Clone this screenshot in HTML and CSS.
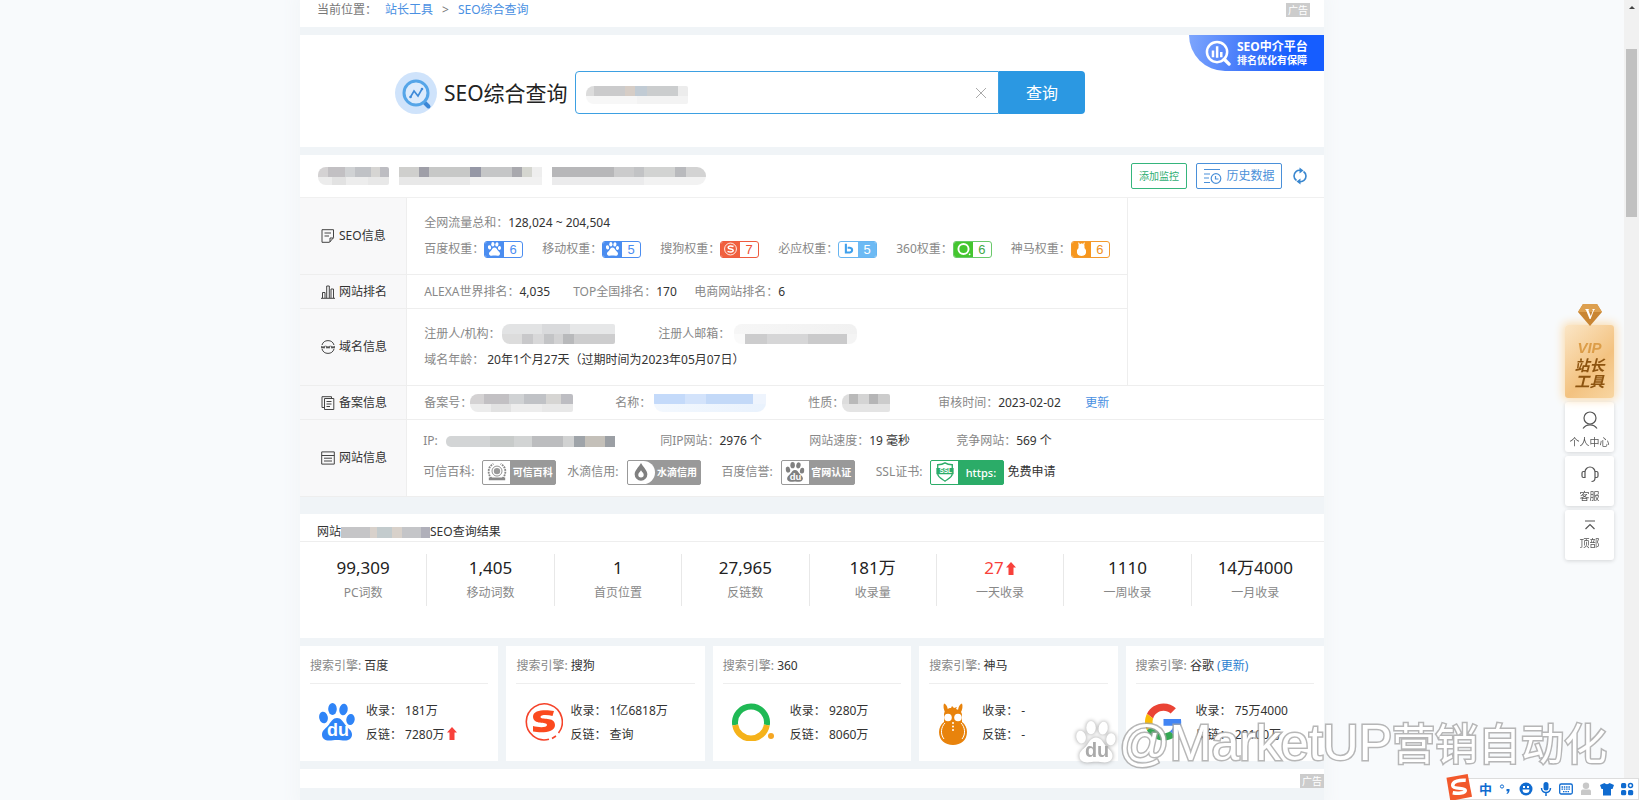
FILE: index.html
```html
<!DOCTYPE html>
<html lang="zh-CN">
<head>
<meta charset="utf-8">
<title>SEO综合查询</title>
<link rel="stylesheet" href="styles.css">
</head>
<body>
<svg class="defs" aria-hidden="true">
  <defs>
    <symbol id="paw" viewBox="0 0 36 38">
      <ellipse cx="13.500" cy="6" rx="4.300" ry="6"/><ellipse cx="24.500" cy="6.500" rx="4.200" ry="5.800" transform="rotate(10 24.500 6.500)"/>
      <ellipse cx="4.500" cy="14.500" rx="4.300" ry="5.800" transform="rotate(-12 4.500 14.500)"/><ellipse cx="31.500" cy="16.500" rx="4.200" ry="5.500" transform="rotate(8 31.500 16.500)"/>
      <path d="M18 15c4 0 6 3.500 8 6.500 2.500 3.500 7.500 6 7 10.500-.5 4-3.500 5.500-7 5.500-3 0-5-.6-8-.6s-5 .6-8 .6c-4 0-7-2-7-6 0-4.500 4.500-6.500 7-10 2-3 4-6.500 8-6.500z"/>
    </symbol>
    <symbol id="up" viewBox="0 0 10 13"><path d="M5 0l5 5.500H7.500V13h-5V5.500H0z" fill="#f8413b"/></symbol>
    <symbol id="llama" viewBox="0 0 28 42">
      <path d="M5 .5c3 1 4 5 4 8L6.500 10C4.500 7 4 3 5 .5zM23 .5c-3 1-4 5-4 8l2.500 1.500C23.500 7 24 3 23 .5z"/>
      <path d="M5 12c0-5 4-7 7-7l1-2 2 2 3-1-1 2c4 1 6 3 6 6v7c3 2 5 6 5 10 0 8-6 13-14 13S0 37 0 29c0-4 2-8 5-10z"/>
    </symbol>
  </defs>
</svg>

<main class="page">
  <nav class="card crumbs" aria-label="当前位置">
    <span class="muted-dark">当前位置：</span>
    <a href="#">站长工具</a><span class="sep">&gt;</span><a href="#">SEO综合查询</a>
    <span class="ad">广告</span>
  </nav>

  <section class="card search">
    <svg class="search-logo" viewBox="0 0 42 42" aria-hidden="true">
      <circle cx="21" cy="21" r="21" fill="#cfe3fb"/>
      <path d="M29.500 30.500l4 4" stroke="#3b86d6" stroke-width="4" stroke-linecap="round"/>
      <circle cx="21" cy="21" r="12" fill="#dcebfc" stroke="#55a5e8" stroke-width="3"/>
      <path d="M15.500 25l3.500-6 4 5 4-7" fill="none" stroke="#3f8ad8" stroke-width="1.600"/>
      <circle cx="15.500" cy="25" r="1.300" fill="#3f8ad8"/><circle cx="27" cy="17" r="1.300" fill="#3f8ad8"/>
    </svg>
    <h1>SEO综合查询</h1>
    <form class="search-form">
      <div class="field">
        <input type="text" aria-label="网站域名">
        <span class="mosaic m-input"></span>
        <button type="button" class="clear" aria-label="清除"><svg viewBox="0 0 12 12"><path d="M1 1l10 10M11 1L1 11" stroke="#aaa" fill="none"/></svg></button>
      </div>
      <button type="button" class="submit">查询</button>
    </form>
    <a href="#" class="ribbon">
      <svg viewBox="0 0 27 27" aria-hidden="true"><g fill="none" stroke="#fff" stroke-width="2.600"><circle cx="12.500" cy="12.500" r="10.500"/><path d="M20 20l5 5" stroke-width="3.500" stroke-linecap="round"/></g><path d="M7 11h2.600v7H7zM11.300 6.500h2.600v12h-2.600zM15.600 12.500h2.600v5.500h-2.600z" fill="#fff"/></svg>
      <span><b>SEO中介平台</b><small>排名优化有保障</small></span>
    </a>
  </section>

  <section class="card">
    <header class="info-head">
      <span class="mosaic m-h1"></span><span class="mosaic m-h2"></span><span class="mosaic m-h3"></span>
      <div class="actions">
        <button type="button" class="btn-green">添加监控</button>
        <button type="button" class="btn-blue"><svg viewBox="0 0 19 16" aria-hidden="true"><g fill="none" stroke="#4a90d9" stroke-width="1.200"><path d="M1 1.500h16M1 6h6M1 10h5M1 14.500h6"/><circle cx="13" cy="10.500" r="4.800"/><path d="M12.500 8v3h3"/></g></svg>历史数据</button>
        <button type="button" class="refresh" aria-label="刷新"><svg viewBox="0 0 14 18"><g fill="none" stroke="#3a87cf" stroke-width="1.600"><path d="M8 3.500C4 2.500 1 5.500 1 9c0 2 1 3.500 2.500 4.500M6 14.500c4 1 7-2 7-5.500 0-2-1-3.500-2.500-4.500"/></g><path d="M6.500 .5l4 3-4 3zM7.500 17.500l-4-3 4-3z" fill="#3a87cf"/></svg></button>
      </div>
    </header>
    <table class="info">
      <tr>
        <th scope="row"><span class="rowhead"><svg viewBox="0 0 14 14"><path d="M1 .7h11.500v8L8.500 13.300H1zM12.500 9H9v4M3.500 4h6.500M3.500 7h4.500"/></svg>SEO信息</span></th>
        <td>
          <div class="line">全网流量总和：<b>128,024 ~ 204,504</b></div>
          <div class="line weights">
            <span>百度权重：<i class="wt blue"><em><svg viewBox="0 0 36 38"><use href="#paw"/></svg></em><strong>6</strong></i></span>
            <span>移动权重：<i class="wt blue"><em><svg viewBox="0 0 36 38"><use href="#paw"/></svg></em><strong>5</strong></i></span>
            <span>搜狗权重：<i class="wt red"><em><svg viewBox="0 0 16 16"><circle cx="8" cy="8" r="6.800" fill="none" stroke="#fff"/><path d="M11.500 5.200C9 4.200 5.300 4.200 5.300 6.300c0 2.400 5.800 1 5.800 3.500 0 2.100-4 2-6.500.9" fill="none" stroke="#fff" stroke-width="1.800"/></svg></em><strong>7</strong></i></span>
            <span>必应权重：<i class="wt sky"><em><svg viewBox="0 0 16 16"><path d="M5 2v10l4.500 0c3.500-.5 3.500-5 0-5.500H7" fill="none" stroke="#3fa0ec" stroke-width="2.400"/></svg></em><strong>5</strong></i></span>
            <span>360权重：<i class="wt green"><em><svg viewBox="0 0 16 16"><circle cx="8" cy="8" r="5.800" fill="none" stroke="#fff" stroke-width="2.200"/><circle cx="15" cy="14" r="1"/></svg></em><strong>6</strong></i></span>
            <span>神马权重：<i class="wt orange"><em><svg viewBox="0 0 28 42"><use href="#llama"/></svg></em><strong>6</strong></i></span>
          </div>
        </td>
        <td class="blank" rowspan="3"></td>
      </tr>
      <tr>
        <th scope="row"><span class="rowhead"><svg viewBox="0 0 14 14"><path d="M0 13.300h14M1.500 13V7.500h2.500V13M5.700 13V1h2.600v12M10 13V4h2.500v9"/></svg>网站排名</span></th>
        <td><div class="line cols-rank"><span>ALEXA世界排名：<b>4,035</b></span><span>TOP全国排名：<b>170</b></span><span>电商网站排名：<b>6</b></span></div></td>
      </tr>
      <tr>
        <th scope="row"><span class="rowhead"><svg viewBox="0 0 14 14"><path d="M1 5a6.300 6.300 0 0 1 12 0M1 9a6.300 6.300 0 0 0 12 0M0 5.800l1 2.500 1-2 1 2 1-2.500M5 5.800l1 2.500 1-2 1 2 1-2.500M10 5.800l1 2.500 1-2 1 2 1-2.500"/></svg>域名信息</span></th>
        <td>
          <div class="line cols-domain"><span>注册人/机构：<span class="mosaic m-org"></span></span><span>注册人邮箱：<span class="mosaic m-mail"></span></span></div>
          <div class="line">域名年龄： <b>20年1个月27天（过期时间为2023年05月07日）</b></div>
        </td>
      </tr>
      <tr>
        <th scope="row"><span class="rowhead"><svg viewBox="0 0 14 14"><path d="M3.500 2.500h9.300v11H3.500zM3.500 11.500H1V.7h9.500v1.800M5.500 5.500h5M5.500 8h5M5.500 10.500h3.500"/></svg>备案信息</span></th>
        <td colspan="2"><div class="line cols-icp"><span>备案号：<span class="mosaic m-icp"></span></span><span>名称：<span class="mosaic m-name"></span></span><span>性质：<span class="mosaic m-kind"></span></span><span>审核时间：<b>2023-02-02</b></span><a href="#">更新</a></div></td>
      </tr>
      <tr>
        <th scope="row"><span class="rowhead"><svg viewBox="0 0 14 14"><path d="M.7.9h12.600v12.200H.7zM.7 4.500h12.600M3 7.200h8M3 10h8"/></svg>网站信息</span></th>
        <td colspan="2" class="site">
          <div class="line cols-site"><span>IP:<span class="mosaic m-ip"></span></span><span>同IP网站：<b>2976 个</b></span><span>网站速度：<b>19 毫秒</b></span><span>竞争网站：<b>569 个</b></span></div>
          <div class="line certs">
            <span>可信百科:<i class="cert"><em><svg viewBox="0 0 22 22"><g fill="none" stroke="#888"><circle cx="11" cy="10" r="5.500"/><path d="M5 18C0 13 1 5 7 2M17 18c5-5 4-13-2-16" stroke-width="2" stroke-dasharray="2 1"/></g><circle cx="11" cy="10" r="3.500" fill="#999"/><path d="M2 17h18v3H2z" fill="#888"/></svg></em><strong>可信百科</strong></i></span>
            <span class="near">水滴信用:<i class="cert drop"><em><svg viewBox="0 0 22 22"><path d="M11 1c2 4 7 8 7 12.500a7 7 0 0 1-14 0C4 9 9 5 11 1z" fill="#808080"/><path d="M11 9c1 2 3 3 3 5a3 3 0 0 1-6 0c0-2 2-3 3-5z" fill="#fff"/></svg></em><strong>水滴信用</strong></i></span>
            <span>百度信誉:<i class="cert"><em><svg viewBox="0 0 36 38" fill="#808080"><use href="#paw"/><text x="8" y="34" class="du">du</text></svg></em><strong>官网认证</strong></i></span>
            <span>SSL证书:<i class="cert ssl"><em><svg viewBox="0 0 22 22"><path d="M11 1c3 2 5 2 8 2v10c0 4-5 6-8 8-3-2-8-4-8-8V3c3 0 5 0 8-2z" fill="#fff" stroke="#2bac68" stroke-width="1.500"/><path d="M1.500 6.500h19v7h-19z" fill="#2bac68"/><text x="5" y="12.500" class="ssl-text">SSL</text></svg></em><strong>https:</strong></i><a href="#" class="apply">免费申请</a></span>
          </div>
        </td>
      </tr>
    </table>
  </section>

  <section class="card stats">
    <h2>网站<span class="mosaic m-site"></span>SEO查询结果</h2>
    <div class="stat-grid">
      <div><strong>99,309</strong><span>PC词数</span></div>
      <div><strong>1,405</strong><span>移动词数</span></div>
      <div><strong>1</strong><span>首页位置</span></div>
      <div><strong>27,965</strong><span>反链数</span></div>
      <div><strong>181万</strong><span>收录量</span></div>
      <div><strong class="rise">27<svg class="up"><use href="#up"/></svg></strong><span>一天收录</span></div>
      <div><strong>1110</strong><span>一周收录</span></div>
      <div><strong>14万4000</strong><span>一月收录</span></div>
    </div>
  </section>

  <section class="engines">
    <article class="card"><h3>搜索引擎: <b>百度</b></h3>
      <div class="engine"><svg class="logo" width="36" height="38" viewBox="0 0 36 38" fill="#2f84f7"><use href="#paw"/><text x="8" y="33" class="du">du</text></svg>
      <p>收录： 181万<br>反链： 7280万<svg class="up"><use href="#up"/></svg></p></div></article>
    <article class="card"><h3>搜索引擎: <b>搜狗</b></h3>
      <div class="engine tight"><svg class="logo" width="38" height="38" viewBox="0 0 38 38"><path d="M33.500 30A18 18 0 1 0 24 36.300M27 35.500l4-2.500" fill="none" stroke="#f5432a" stroke-width="1.600"/><path d="M29 8c-8-1.500-21-1.500-21 5.500 0 9 14 4.500 14 8.500 0 3-9 2.500-14 1v5.500c8 1.500 22 1.500 22-6.500 0-9-14.500-4.500-14.500-8 0-2.500 7-2.500 12-1z" fill="#fb4a1f"/></svg>
      <p>收录： 1亿6818万<br>反链： 查询</p></div></article>
    <article class="card"><h3>搜索引擎: <b>360</b></h3>
      <div class="engine wide"><svg class="logo" width="42" height="38" viewBox="0 0 42 38"><path d="M3.200 22a16 16 0 1 1 31.600 0" fill="none" stroke="#1fb955" stroke-width="6"/><path d="M3.200 22a16 16 0 0 0 31.600 0" fill="none" stroke="#f5b21a" stroke-width="6"/><circle cx="39" cy="33" r="3" fill="#f5a623"/></svg>
      <p>收录： 9280万<br>反链： 8060万</p></div></article>
    <article class="card"><h3>搜索引擎: <b>神马</b></h3>
      <div class="engine mid"><svg class="logo" width="30" height="42" viewBox="0 0 28 42"><use href="#llama" fill="#e8830c"/><g fill="#fff"><circle cx="9" cy="14.500" r="3.800"/><circle cx="19" cy="14.500" r="3.800"/><circle cx="14" cy="20" r="1"/><circle cx="14" cy="23.500" r="1"/><circle cx="14" cy="27" r="1"/></g><path d="M6 20c-4 4-5 11-1 16M22 20c4 4 5 11 1 16" fill="none" stroke="#fff"/></svg>
      <p>收录： -<br>反链： -</p></div></article>
    <article class="card"><h3>搜索引擎: <b>谷歌</b> <a href="#">(更新)</a></h3>
      <div class="engine mid"><svg class="logo" width="37" height="38" viewBox="0 0 48 48"><path fill="#ea4335" d="M24 9.500c3.540 0 6.710 1.220 9.210 3.600l6.850-6.850C35.900 2.380 30.470 0 24 0 14.620 0 6.510 5.380 2.560 13.220l7.980 6.190C12.430 13.720 17.740 9.500 24 9.500z"/><path fill="#4285f4" d="M46.980 24.550c0-1.570-.15-3.090-.38-4.550H24v9.020h12.940c-.58 2.960-2.260 5.480-4.780 7.180l7.730 6c4.510-4.180 7.090-10.360 7.090-17.650z"/><path fill="#fbbc05" d="M10.530 28.590c-.48-1.450-.76-2.990-.76-4.590s.27-3.140.76-4.590l-7.980-6.190C.92 16.460 0 20.120 0 24c0 3.880.92 7.540 2.560 10.780l7.970-6.190z"/><path fill="#34a853" d="M24 48c6.480 0 11.930-2.130 15.890-5.810l-7.730-6c-2.150 1.450-4.920 2.300-8.160 2.300-6.260 0-11.570-4.220-13.470-9.910l-7.980 6.190C6.510 42.620 14.620 48 24 48z"/></svg>
      <p>收录： 75万4000<br>反链： 28100万</p></div></article>
  </section>

  <div class="card strip"><span class="ad">广告</span></div>
</main>

<aside class="side">
  <a href="#" class="vip">
    <svg class="gem" viewBox="0 0 24 22" aria-hidden="true"><path d="M5 0h14l5 8-12 14L0 8z" fill="#c98532"/><path d="M5 0h14l5 8H0z" fill="#dda050"/><text x="7" y="15" class="gem-v">V</text></svg>
    <em>VIP</em><b>站长<br>工具</b>
  </a>
  <a href="#"><svg viewBox="0 0 20 20" aria-hidden="true"><circle cx="10" cy="8" r="6"/><path d="M3 18.500c2-3 4.500-3.700 7-3.700s5 .7 7 3.700"/></svg>个人中心</a>
  <a href="#"><svg viewBox="0 0 20 20" aria-hidden="true"><path d="M5 14V8a5 5 0 0 1 10 0v6c0 2-1 3.500-3.500 3.500M5 7.500H3.500c-1 0-1.500.5-1.500 1.500v3c0 1 .5 1.500 1.500 1.500H5M15 7.500h1.500c1 0 1.500.5 1.500 1.500v3c0 1-.5 1.500-1.500 1.500H15"/></svg>客服</a>
  <a href="#" class="top"><svg viewBox="0 0 20 20" aria-hidden="true"><path d="M5 6h10M5.500 14L10 9.500l4.500 4.500"/></svg>顶部</a>
</aside>

<div class="scrollbar" aria-hidden="true"><span class="arrow"></span><span class="thumb"></span></div>

<div class="watermark">
  <svg viewBox="0 0 36 38" aria-hidden="true"><use href="#paw"/><text x="8" y="33" class="du">du</text></svg>
  <span>@MarketUP</span><span class="zh">营销自动化</span>
</div>

<div class="ime">
  <svg class="ime-logo" viewBox="0 0 28 28" aria-hidden="true"><path d="M1 4l22-4 4.500 23.500L5 28z" fill="#f2582b"/><path d="M21 6.500C15 6 7 7.500 7.500 12c.5 4.500 13 1.500 13 5 0 3-8 3.500-13 2.500" fill="none" stroke="#fff" stroke-width="3.600"/></svg>
  <b>中</b>
  <svg viewBox="0 0 14 14"><circle cx="4" cy="4.500" r="1.600" fill="none" stroke="#0f6bd0"/><path d="M8.500 7h3c.3 2.500-.5 4-2.500 5l-.5-.7c1-.6 1.300-1.200 1.200-2H8.500z"/></svg>
  <svg viewBox="0 0 14 14"><circle cx="7" cy="7" r="6.500"/><path d="M3.500 7.500h7a3.500 3.500 0 0 1-7 0zM4 4h2v2H4zM8 4h2v2H8z" fill="#fff"/></svg>
  <svg viewBox="0 0 14 14"><rect x="4.500" y="0" width="5" height="8.500" rx="2.500"/><path d="M2.500 6c0 6 9 6 9 0M7 10.500V14" fill="none" stroke="#0f6bd0" stroke-width="1.500"/></svg>
  <svg viewBox="0 0 14 14"><rect x=".7" y="2" width="12.600" height="10" rx="1.500" fill="none" stroke="#0f6bd0" stroke-width="1.300"/><path d="M2.500 5h9M2.500 7.200h9M4 9.700h6" stroke="#0f6bd0" stroke-width="1.300" stroke-dasharray="1.500 .8"/></svg>
  <svg viewBox="0 0 14 14" class="off"><circle cx="7" cy="3.700" r="3.200"/><path d="M2 13V9.500C2 8 3 7.500 4 7.500h6c1 0 2 .5 2 2V13z"/></svg>
  <svg viewBox="0 0 14 14"><path d="M4.500 1c1 1.500 4 1.500 5 0L14 3l-1.500 4H11v6.500H3V7H1.500L0 3z"/></svg>
  <svg viewBox="0 0 14 14"><rect x="1" y="1" width="5.200" height="5.200" rx="1.500"/><circle cx="10.500" cy="3.600" r="2" fill="none" stroke="#0f6bd0" stroke-width="1.500"/><rect x="1" y="8" width="5.200" height="5.200" rx="1.500"/><rect x="8" y="8" width="5.200" height="5.200" rx="1.500"/></svg>
</div>
</body>
</html>
```

FILE: styles.css
```css
* { box-sizing: border-box; }
body {
  margin: 0;
  padding-right: 15px;
  min-height: 100vh;
  overflow: hidden;
  background: #f8fafc;
  color: #333;
  font: 12px/18px "Noto Sans", "Noto Sans CJK SC", sans-serif;
}
a { color: #4a90e2; text-decoration: none; }
button { font: inherit; cursor: pointer; padding: 0; }
b, i, em { font-weight: 400; font-style: normal; }
h1, h2, h3, p { margin: 0; font-weight: 400; }
.defs { position: absolute; width: 0; height: 0; }

.page {
  width: 63%;
  min-width: 1024px;
  max-width: 1200px;
  min-height: 100vh;
  margin: 0 auto;
  display: flex;
  flex-direction: column;
  gap: 8px;
  background: #f0f4f7;
  box-shadow: 0 0 14px 6px #f3f6f8;
}
.card { background: #fff; }

/* breadcrumb */
.crumbs { display: flex; align-items: center; padding: 1px 14px 8px 17px; }
.muted-dark { color: #777; width: 68px; }
.sep { padding: 0 9px; color: #777; }
.ad { margin-left: auto; padding: 0 2px; background: #ccc; color: #fff; font-size: 10px; line-height: 14px; }

/* search */
.search { position: relative; display: flex; align-items: center; padding: 36px 239px 33px 95px; }
.search-logo { width: 42px; height: 42px; margin-right: 7px; flex: none; }
.search h1 { font-size: 21px; line-height: 42px; color: #222; white-space: nowrap; margin-right: 7px; flex: none; }
.search-form { display: flex; flex: 1; height: 43px; }
.field { position: relative; flex: 1; }
.field input { width: 100%; height: 43px; border: 1px solid #3da0e2; border-radius: 4px 0 0 4px; padding: 0 36px 0 12px; font: inherit; outline: 0; }
.clear { position: absolute; right: 12px; top: 16px; width: 12px; height: 12px; border: 0; background: none; }
.clear svg { display: block; }
.submit { width: 86px; border: 0; border-radius: 0 4px 4px 0; background: #2b98e2; color: #fff; font-size: 16px; }
.ribbon {
  position: absolute; top: 0; right: 0; width: 135px; height: 36px;
  padding-left: 16px; display: flex; align-items: center; gap: 6px;
  border-bottom-left-radius: 36px; color: #fff;
  background: linear-gradient(100deg, #7ea6fd 0%, #3f76fa 45%, #165dff 75%);
}
.ribbon svg { width: 26px; height: 26px; }
.ribbon b, .ribbon small { display: block; font-weight: 700; white-space: nowrap; }
.ribbon b { font-size: 12px; line-height: 15px; }
.ribbon small { font-size: 10px; line-height: 13px; }

/* pixelated blocks */
.mosaic {
  display: inline-block; height: 18px; vertical-align: middle;
  border-radius: 8px 2px 2px 8px;
  background:
    linear-gradient(90deg, #d4d2d3 0 14%, #c2c0c3 14% 38%, #d0d2d4 38% 52%, #c0c2c6 52% 74%, #d6d5d3 74% 88%, #bdbdc2 88%) top / 100% 10px no-repeat,
    linear-gradient(90deg, #ececec 0 20%, #e2e2e2 20% 40%, #ededed 40% 70%, #e8e8e8 70%);
}
.m-input { position: absolute; left: 11px; top: 15px; width: 102px;
  background:
    linear-gradient(90deg, #dcdcdc 0 8%, #cbcbcc 8% 38%, #d6cdc6 38% 48%, #c1cbd4 48% 60%, #cbcdce 60% 90%, #ececec 90%) top / 100% 10px no-repeat,
    linear-gradient(90deg, #f7f7f7 0 50%, #f3f3f3 50%); }
.m-h1 { width: 71px; }
.m-h2 { width: 143px; border-radius: 0;
  background:
    linear-gradient(90deg, #cfcfcd 0 14%, #9f9fa8 14% 21%, #c7c8c7 21% 50%, #9698a6 50% 57%, #c5c6c7 57% 79%, #a9a9ae 79% 86%, #d5d6d0 86% 93%, #eee 93%) top / 100% 10px no-repeat,
    linear-gradient(90deg, #e8e8e8 0 50%, #f1f1f1 50%); }
.m-h3 { width: 154px; border-radius: 0 9px 9px 0;
  background:
    linear-gradient(90deg, #b7b7b9 0 40%, #cbcbcc 40% 53%, #c2c3c5 53% 60%, #d2d3d2 60% 80%, #b9babd 80% 87%, #d3d3d3 87%) top / 100% 10px no-repeat,
    linear-gradient(90deg, #ebebec 0 60%, #f2f2f2 60%); }
.m-org { width: 113px; height: 20px; margin-left: 1px;
  background:
    linear-gradient(90deg, #e2e3e4 0 35%, #d9dadc 35% 60%, #e6e7e8 60%) top / 100% 10px no-repeat,
    linear-gradient(90deg, #dcdcdc 0 18%, #c8c8ca 18% 27%, #d8d8d9 27% 37%, #c3c4c6 37% 46%, #d2d2d3 46% 54%, #b8b9bb 54% 64%, #cdcdce 64%); }
.m-mail { width: 123px; height: 20px; margin-left: 4px; border-radius: 8px;
  background:
    linear-gradient(90deg, #fafafa 0 9%, #cccccd 9% 27%, #d6d6d7 27% 60%, #cacacb 60% 92%, #f4f4f4 92%) bottom / 100% 10px no-repeat,
    linear-gradient(90deg, #f6f6f6, #f1f1f1); }
.m-icp { width: 103px; margin-left: -2px; }
.m-name { width: 112px; margin-left: 3px; border-radius: 0 0 9px 9px;
  background:
    linear-gradient(90deg, #c4dafa 0 28%, #d3e3fb 28% 46%, #c3d9f8 46% 88%, #eef4fd 88%) top / 100% 10px no-repeat,
    linear-gradient(90deg, #f3f8fe, #e9f2fd); }
.m-kind { width: 48px; margin-left: -2px;
  background:
    linear-gradient(90deg, #ddd 0 14%, #b9b9b9 14% 34%, #d4d4d4 34% 57%, #b5b5b6 57% 75%, #ccc 75%) top / 100% 10px no-repeat,
    #e4e4e4; }
.m-ip { width: 169px; height: 11px; margin-left: 8px; border-radius: 5px 0 0 5px;
  background: linear-gradient(90deg, #d3d5d6 0 26%, #c8cbca 26% 40%, #d2d4d4 40% 51%, #bcbdbf 51% 69%, #d1d2d2 69% 76%, #9fa4a9 76% 82%, #c4c0b9 82% 94%, #9b9fa4 94%); }
.m-site { width: 89px; height: 11px; border-radius: 0;
  background: linear-gradient(90deg, #c5c5c7 0 33%, #d8d1cb 33% 40%, #c3cbcd 40% 57%, #d8d1ca 57% 68%, #c4c5c8 68% 90%, #b0b0ba 90%); }

/* site information */
.info-head { display: flex; align-items: center; height: 43px; padding: 0 17px 0 18px; border-bottom: 1px solid #f0f0f0; }
.info-head .mosaic { margin-right: 10px; }
.actions { margin-left: auto; display: flex; align-items: center; }
.actions button { height: 26px; border-radius: 2px; background: #fff; display: flex; align-items: center; justify-content: center; }
.actions .btn-green { width: 56px; border: 1px solid #35b57c; color: #2fae74; font-size: 10px; }
.actions .btn-blue { width: 86px; margin: 0 11px 0 9px; gap: 4px; border: 1px solid #4a90d9; color: #4a90d9; }
.btn-blue svg { width: 19px; height: 16px; }
.actions .refresh { border: 0; width: 14px; }
.refresh svg { width: 14px; height: 18px; }
.info { width: 100%; border-collapse: collapse; }
.info th, .info td { border-bottom: 1px solid #eee; padding: 0; text-align: left; font-weight: 400; }
.info th { width: 107px; background: #f8f8f9; border-right: 1px solid #eee; }
.info td { padding: 12px 17px; color: #888; }
.info tr:nth-child(2) td, .info tr:nth-child(4) td { padding: 4px 17px 3px; }
.info td.blank { width: 198px; border-left: 1px solid #eee; }
.info td.site { padding: 8px 17px 6px 16px; }
.info b { color: #333; }
.rowhead { display: flex; align-items: center; gap: 4px; padding-left: 21px; }
.rowhead svg { width: 14px; height: 14px; fill: none; stroke: #444; stroke-width: 1; }
.line { height: 26px; line-height: 26px; white-space: nowrap; }
.line > span { display: flex; align-items: center; }
.weights { display: flex; gap: 19px; }
.cols-rank { display: grid; grid-template-columns: 149px 121px 1fr; }
.cols-domain { display: grid; grid-template-columns: 234px 1fr; }
.cols-icp { display: grid; grid-template-columns: 191px 193px 130px 147px 1fr; }
.cols-site { display: grid; grid-template-columns: 237px 149px 147px 1fr; }
.wt { display: flex; width: 39px; height: 17px; border: 1px solid; border-radius: 3px; overflow: hidden; }
.wt em { width: 19px; display: flex; align-items: center; justify-content: center; fill: #fff; }
.wt svg { width: 15px; height: 14px; }
.wt strong { flex: 1; text-align: center; font: 13px/16px "Liberation Sans", sans-serif; }
.blue { border-color: #4b8df0; color: #4b8df0; }
.blue em { background: #4b8df0; }
.red { border-color: #ee5b3f; color: #ee4f32; }
.red em { background: #f0603f; }
.wt.sky { border-color: #67b5f1; color: #fff; }
.sky strong { background: #6dbaf4; }
.green { border-color: #6ac96b; color: #41a848; }
.green em { background: #44c62f; }
.orange { border-color: #f39a2e; color: #f0901c; }
.orange em { background: #f7971e; }
.line.certs { display: flex; gap: 21px; height: 36px; line-height: 36px; }
.certs .near { margin-left: -10px; }
.cert { display: flex; width: 74px; height: 25px; margin-left: 8px; border: 1px solid #999; border-radius: 2px; background: #999; overflow: hidden; }
.cert em { width: 27px; background: #fff; display: flex; align-items: center; justify-content: center; }
.cert.drop em { border-radius: 0 12px 12px 0; }
.cert svg { width: 20px; height: 20px; }
.cert strong { flex: 1; text-align: center; color: #fff; font-size: 10px; font-weight: 700; line-height: 23px; }
.cert.ssl { background: #2bac68; border-color: #2bac68; }
.cert.ssl strong { font-size: 11px; font-weight: 500; }
.apply { color: #333; margin-left: 3px; }
.du { font: 700 18px "Liberation Sans", sans-serif; fill: #fff; }
.ssl-text { font: 700 7px "Liberation Sans", sans-serif; fill: #fff; }

/* result figures */
.stats { margin-top: 9px; padding-bottom: 32px; }
.stats h2 { display: flex; align-items: center; padding: 9px 17px 0; font-size: 12px; line-height: 18px; border-bottom: 1px solid #eee; }
.stat-grid { display: grid; grid-template-columns: repeat(8, 1fr); padding: 12px 5px 0 0; }
.stat-grid div { text-align: center; border-right: 1px solid #e8e8e8; height: 52px; }
.stat-grid div:last-child { border-right: 0; }
.stat-grid strong { display: block; font-size: 17px; line-height: 28px; font-weight: 400; color: #222; }
.stat-grid span { color: #888; line-height: 22px; display: block; }
.stat-grid .rise { color: #f8413b; }
.up { width: 10px; height: 13px; margin-left: 2px; vertical-align: -1px; }

/* search engines */
.engines { display: grid; grid-template-columns: repeat(5, 1fr); gap: 8px; }
.engines .card { padding: 11px 10px 14px; }
.engines h3 { font-size: 12px; line-height: 18px; padding-bottom: 8px; border-bottom: 1px solid #eee; color: #888; }
.engines h3 b { color: #333; }
.engines h3 a { color: #2b7fd0; }
.engine { display: flex; gap: 11px; padding: 15px 0 0 9px; height: 63px; }
.engine.tight { gap: 7px; }
.engine.mid { gap: 14px; }
.engine.wide { gap: 16px; }
.engine .logo { margin-top: 4px; flex: none; }
.engine p { line-height: 24px; white-space: nowrap; }

.strip { display: flex; align-items: flex-end; height: 19px; }

/* floating tools */
.side { position: fixed; right: 25px; top: 325px; width: 49px; display: flex; flex-direction: column; gap: 4px; }
.side a { height: 50px; padding-top: 5px; display: flex; flex-direction: column; align-items: center; justify-content: center; background: #fff; border-radius: 3px; box-shadow: 0 1px 4px rgba(0,0,0,.15); color: #555; font-size: 10px; line-height: 16px; }
.side a > svg { width: 20px; height: 20px; fill: none; stroke: #555; stroke-width: 1.2; margin-bottom: 4px; }
.side .top { padding: 0 0 4px; }
.side .top > svg { margin-bottom: 0; }
.side .vip { position: relative; height: 73px; padding-top: 4px; background: linear-gradient(135deg, #fbe6c6, #f3c280 60%, #f8d6a2); box-shadow: 0 0 10px 2px #fbdcae; }
.side .vip .gem { position: absolute; left: 13px; top: -21px; width: 24px; height: 22px; stroke: none; }
.vip em { font: italic 700 15px/18px "Liberation Sans", sans-serif; color: #dc9d48; }
.vip b { font-size: 15px; line-height: 16px; font-weight: 700; font-style: italic; color: #8d5410; }
.gem-v { font: 700 14px "Liberation Serif", serif; fill: #fff; }

.scrollbar { position: fixed; right: 0; top: 0; bottom: 0; width: 15px; padding: 6px 2px 0; background: #f1f1f1; }
.arrow { display: block; width: 0; margin: 0 auto 40px; border: 3px solid transparent; border-top: 0; border-bottom-color: #444; }
.thumb { display: block; height: 168px; background: #c1c1c1; }

/* watermark */
.watermark { position: fixed; right: 32px; bottom: 27px; display: flex; align-items: baseline; color: #fff; font: 50px/60px "Liberation Sans", sans-serif; -webkit-text-stroke: 3px rgba(165,165,165,.8); paint-order: stroke fill; pointer-events: none; }
.watermark svg { width: 40px; height: 42px; margin-right: 3px; align-self: center; fill: #fff; overflow: visible; filter: drop-shadow(0 0 2px #999); -webkit-text-stroke: 0; }
.watermark .du { fill: #aaa; }
.watermark .zh { font: 43px/60px "Noto Sans CJK SC", sans-serif; }

/* input method bar */
.ime { position: fixed; right: 0; bottom: 0; width: 183px; height: 22px; display: flex; align-items: center; justify-content: space-between; padding: 0 4px 0 22px; background: #fff; border: 1px solid #ddd; color: #0f6bd0; fill: #0f6bd0; }
.ime svg { width: 14px; height: 14px; }
.ime .ime-logo { position: absolute; left: -12px; top: -5px; width: 28px; height: 27px; }
.ime b { font-size: 13px; font-weight: 700; }
.ime .off { fill: #c8c8c8; }
```
